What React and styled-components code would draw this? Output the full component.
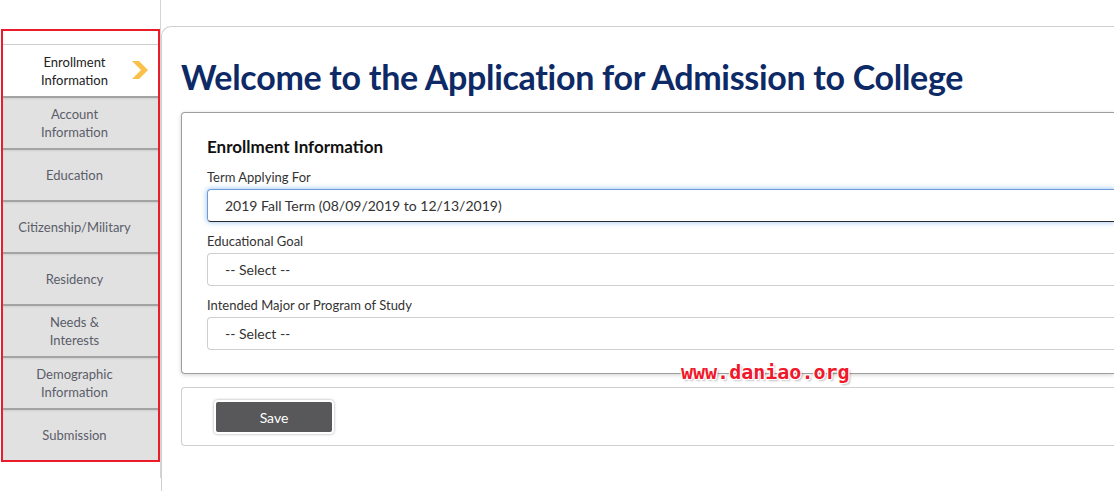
import styled, { createGlobalStyle } from "styled-components";

const GlobalStyle = createGlobalStyle`
  html, body { margin: 0; padding: 0; background: #fff; }
  body { font-family: "Lato", "Liberation Sans", sans-serif; overflow: hidden; }
  * { box-sizing: border-box; }
`;

const Page = styled.div`
  width: 1114px;
  height: 491px;
  display: flex;
  position: relative;
  overflow: hidden;
`;

const SidebarCol = styled.div`
  width: 161px;
  flex-shrink: 0;
  padding: 29px 0 0 1px;
  border-right: 1px solid #d4d4d4;
  height: 478px;
`;

const Sidebar = styled.nav`
  width: 159px;
  border: 2px solid #ea1c2a;
  padding-top: 13px;
  background: #fff;
`;

const NavItem = styled.div`
  height: 52px;
  display: flex;
  align-items: center;
  justify-content: center;
  text-align: center;
  padding-right: 12px;
  font-size: 13px;
  line-height: 18px;
  position: relative;
  background: ${(p) => (p.$active ? "#fff" : "#e1e1e1")};
  color: ${(p) => (p.$active ? "#222" : "#5b5d69")};
  border-top: ${(p) => (p.$active ? "1px solid #cfcfcf" : "2px solid #a3a3a3")};
  box-shadow: ${(p) => (p.$active ? "none" : "inset 0 2px 2px -1px rgba(0,0,0,0.08)")};
`;

const Chevron = styled.svg`
  position: absolute;
  right: 9px;
  top: 16px;
`;

const Main = styled.main`
  flex: 1;
  margin-top: 26px;
  border-top: 1px solid #cfcfcf;
  border-left: 1px solid #cfcfcf;
  border-top-left-radius: 10px;
  padding: 28px 0 0 19px;
`;

const Title = styled.h1`
  margin: 0 0 13px;
  font-size: 34px;
  font-weight: 700;
  color: #0d2a66;
  letter-spacing: -0.3px;
  line-height: 44px;
`;

const Card = styled.section`
  border: 1px solid #9e9e9e;
  border-right: none;
  border-radius: 4px 0 0 4px;
  box-shadow: 0 1px 4px rgba(0, 0, 0, 0.18);
  background: #fff;
  padding: 22px 0 23px 25px;
  margin-bottom: 13px;
`;

const CardTitle = styled.h2`
  margin: 0 0 9px;
  font-size: 17px;
  font-weight: 700;
  color: #111;
  line-height: 24px;
`;

const Field = styled.div`
  margin-bottom: 10px;
  &:last-child { margin-bottom: 0; }
`;

const Label = styled.div`
  font-size: 13px;
  color: #333;
  line-height: 18px;
  margin-bottom: 3px;
`;

const SelectBox = styled.div`
  height: 33px;
  border: 1px solid ${(p) => (p.$focus ? "#2b2b2b" : "#cfcfcf")};
  border-right: none;
  border-radius: 4px 0 0 4px;
  padding-left: 17px;
  display: flex;
  align-items: center;
  font-size: 14px;
  color: #333;
  box-shadow: ${(p) => (p.$focus ? "0 0 5px 1px rgba(80,150,230,0.45)" : "none")};
  ${(p) => p.$focus && "border-left-color: #6a9bd8; border-top-color: #6a9bd8;"}
`;

const ActionCard = styled.section`
  border: 1px solid #cfcfcf;
  border-right: none;
  border-radius: 4px 0 0 4px;
  padding: 12px 0 11px 32px;
  background: #fff;
`;

const SaveButton = styled.button`
  width: 120px;
  height: 34px;
  background: #58585a;
  color: #fff;
  border: 2px solid #fff;
  border-radius: 4px;
  box-shadow: 0 0 3px rgba(0, 0, 0, 0.35);
  font-family: inherit;
  font-size: 14px;
`;

const Watermark = styled.div`
  position: absolute;
  left: 681px;
  top: 360px;
  font-family: "DejaVu Sans Mono", monospace;
  font-weight: 700;
  font-size: 20px;
  color: #f0182a;
  text-shadow: 1px 1px 0 #fff, -1px -1px 0 #fff, 1px -1px 0 #fff, -1px 1px 0 #fff,
    2px 2px 2px rgba(0, 0, 0, 0.25);
`;

const navItems = [
  ["Enrollment", "Information"],
  ["Account", "Information"],
  ["Education"],
  ["Citizenship/Military"],
  ["Residency"],
  ["Needs &", "Interests"],
  ["Demographic", "Information"],
  ["Submission"],
];

export default function App() {
  return (
    <Page>
      <GlobalStyle />
      <SidebarCol>
        <Sidebar>
          {navItems.map((lines, i) => (
            <NavItem key={i} $active={i === 0}>
              <span>
                {lines.map((l, j) => (
                  <div key={j}>{l}</div>
                ))}
              </span>
              {i === 0 && (
                <Chevron width="17" height="18" viewBox="0 0 17 18">
                  <path d="M0 0 H7 L16 9 L7 18 H0 L9 9 Z" fill="#f9c04a" />
                </Chevron>
              )}
            </NavItem>
          ))}
        </Sidebar>
      </SidebarCol>
      <Main>
        <Title>Welcome to the Application for Admission to College</Title>
        <Card>
          <CardTitle>Enrollment Information</CardTitle>
          <Field>
            <Label>Term Applying For</Label>
            <SelectBox $focus>2019 Fall Term (08/09/2019 to 12/13/2019)</SelectBox>
          </Field>
          <Field>
            <Label>Educational Goal</Label>
            <SelectBox>-- Select --</SelectBox>
          </Field>
          <Field>
            <Label>Intended Major or Program of Study</Label>
            <SelectBox>-- Select --</SelectBox>
          </Field>
        </Card>
        <ActionCard>
          <SaveButton>Save</SaveButton>
        </ActionCard>
      </Main>
      <Watermark>www.daniao.org</Watermark>
    </Page>
  );
}
